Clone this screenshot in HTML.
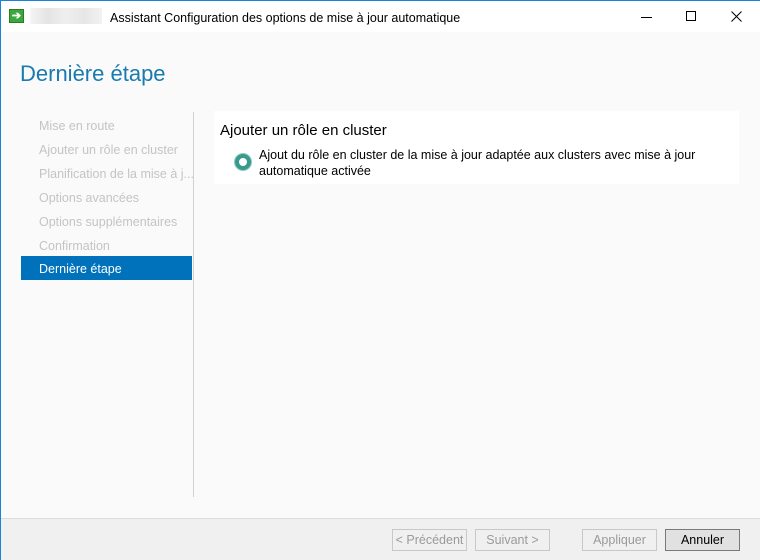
<!DOCTYPE html>
<html><head><meta charset="utf-8"><style>
*{margin:0;padding:0;box-sizing:border-box}
body{width:760px;height:560px;background:#fafafa;font-family:"Liberation Sans",sans-serif;position:relative;overflow:hidden}
.t{position:absolute;white-space:nowrap}
.nav{position:absolute;left:39px;font-size:12.5px;color:#c4c4c4}
.btn{position:absolute;top:529px;height:22px;border:1px solid #c8c8c8;background:#f0f0f0;color:#9a9a9a;font-size:12.5px;text-align:center;line-height:21px}
</style></head><body>
<div style="position:absolute;left:0;top:0;width:760px;height:32px;background:#fff"></div>
<div style="position:absolute;left:0;top:0;width:760px;height:1px;background:#1883d7"></div>
<div style="position:absolute;left:0;top:0;width:1px;height:560px;background:#1883d7"></div>
<div style="position:absolute;left:9px;top:9px;width:15px;height:14px;background:#3aa83a;border:1px solid #2a7a2a;color:#fff;font-size:11px;line-height:12px;text-align:center;font-weight:bold">➔</div>
<div style="position:absolute;left:30px;top:8px;width:72px;height:16px;background:linear-gradient(90deg,#f4f4f4,#e4e4e4,#efefef,#e6e6e6,#f2f2f2)"></div>
<div class="t" style="left:110px;top:11px;font-size:12.5px;color:#000">Assistant Configuration des options de mise à jour automatique</div>
<div style="position:absolute;left:641px;top:17px;width:11px;height:1px;background:#000"></div>
<div style="position:absolute;left:686px;top:11px;width:10px;height:10px;border:1px solid #000"></div>
<svg style="position:absolute;left:731px;top:11px" width="11" height="11"><path d="M0.5 0.5L10.5 10.5M10.5 0.5L0.5 10.5" stroke="#000" stroke-width="1"/></svg>
<div class="t" style="left:20px;top:61px;font-size:22px;color:#1a7ab0">Dernière étape</div>
<div class="nav" style="top:119px">Mise en route</div>
<div class="nav" style="top:143px">Ajouter un rôle en cluster</div>
<div class="nav" style="top:167px">Planification de la mise à j...</div>
<div class="nav" style="top:191px">Options avancées</div>
<div class="nav" style="top:215px">Options supplémentaires</div>
<div class="nav" style="top:239px">Confirmation</div>
<div style="position:absolute;left:21px;top:256px;width:171px;height:24px;background:#0072bc"></div>
<div class="nav" style="top:262px;color:#fff">Dernière étape</div>
<div style="position:absolute;left:193px;top:112px;width:1px;height:385px;background:#d0d0d0"></div>
<div style="position:absolute;left:214px;top:111px;width:525px;height:73px;background:#fff"></div>
<div class="t" style="left:220px;top:122px;font-size:15px;color:#000">Ajouter un rôle en cluster</div>
<div style="position:absolute;left:235px;top:154px;width:16px;height:16px;border-radius:50%;border:4px solid #3a9a8a;background:#fff;box-shadow:0 0 0 1px #8cc"></div>
<div class="t" style="left:259px;top:147px;font-size:12.5px;color:#000;line-height:16px">Ajout du rôle en cluster de la mise à jour adaptée aux clusters avec mise à jour<br>automatique activée</div>
<div style="position:absolute;left:1px;top:518px;width:759px;height:42px;background:#f0f0f0;border-top:1px solid #dcdcdc"></div>
<div class="btn" style="left:392px;width:75px">&lt; Précédent</div>
<div class="btn" style="left:475px;width:75px">Suivant &gt;</div>
<div class="btn" style="left:582px;width:75px">Appliquer</div>
<div class="btn" style="left:665px;width:75px;background:#e1e1e1;border-color:#7a7a7a;color:#000">Annuler</div>
</body></html>
